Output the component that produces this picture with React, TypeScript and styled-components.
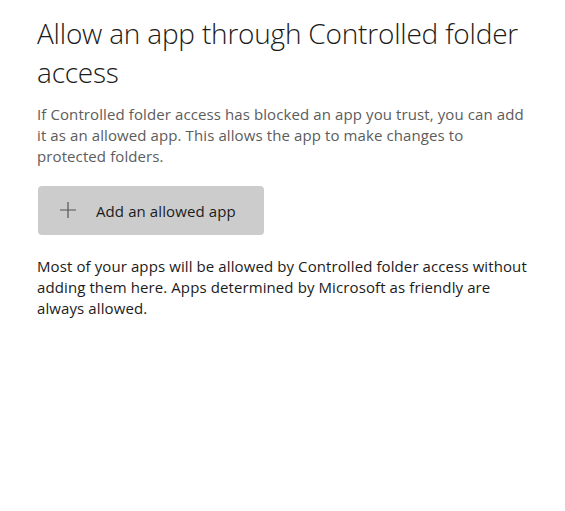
import React from "react";
import styled, { createGlobalStyle } from "styled-components";

const GlobalStyle = createGlobalStyle`
    body {
        margin: 0;
        background: #fff;
        font-family: "Open Sans", "Noto Sans", sans-serif;
    }
`;

const Page = styled.div`
    box-sizing: border-box;
    width: 565px;
    min-height: 511px;
    padding: 14px 38px 0 37px;
    display: flex;
    flex-direction: column;
    align-items: flex-start;
`;

const Title = styled.h1`
    margin: 0;
    font-size: 28px;
    font-weight: 300;
    line-height: 39px;
    color: #1b1b1b;
    letter-spacing: -0.2px;
`;

const Text = styled.p<{ $muted?: boolean }>`
    margin: 0;
    font-size: 15px;
    line-height: 21px;
    color: ${(p) => (p.$muted ? "#5c5c5c" : "#1b1b1b")};
    letter-spacing: 0.1px;
`;

const Intro = styled(Text)`
    margin-top: 12px;
`;

const AddButton = styled.button`
    margin: 19px 0 0 1px;
    width: 226px;
    height: 49px;
    border: none;
    border-radius: 4px;
    background: #cccccc;
    display: flex;
    align-items: center;
    gap: 20px;
    padding: 0 0 0 22px;
    font-family: inherit;
    font-size: 15px;
    color: #1b1b1b;
    letter-spacing: 0.1px;
    cursor: pointer;

    svg {
        flex: none;
        margin-top: -1px;
    }
`;

const Note = styled(Text)`
    margin-top: 21px;
`;

export default function App() {
    return (
        <>
            <GlobalStyle />
            <Page>
                <Title>Allow an app through Controlled folder access</Title>
                <Intro $muted>
                    If Controlled folder access has blocked an app you trust, you can add it as an allowed app. This allows the app to make changes to protected folders.
                </Intro>
                <AddButton>
                    <svg width="16" height="16" viewBox="0 0 16 16">
                        <path d="M8 0v16M0 8h16" stroke="#555" strokeWidth="1.2" fill="none" />
                    </svg>
                    Add an allowed app
                </AddButton>
                <Note>
                    Most of your apps will be allowed by Controlled folder access without adding them here. Apps determined by Microsoft as friendly are always allowed.
                </Note>
            </Page>
        </>
    );
}
